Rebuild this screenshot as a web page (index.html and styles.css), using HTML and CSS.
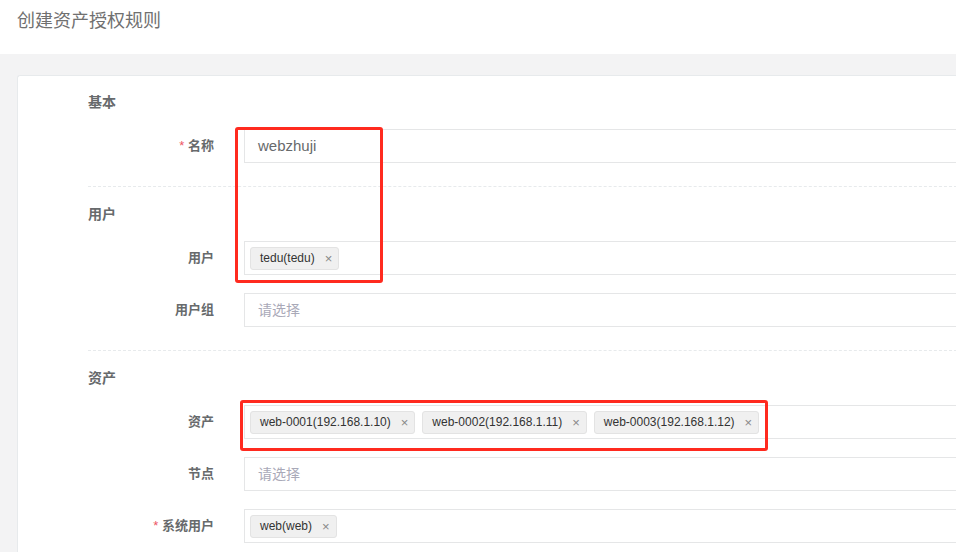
FILE: index.html
```html
<!DOCTYPE html>
<html lang="zh">
<head>
<meta charset="utf-8">
<title>创建资产授权规则</title>
<link rel="stylesheet" href="styles.css">
</head>
<body>
<header class="page-head">
  <h2 class="page-title">创建资产授权规则</h2>
</header>
<main class="page-body">
  <section class="card">
    <h3 class="sec-title">基本</h3>
    <div class="row">
      <label class="lbl"><span class="req">*</span> 名称</label>
      <div class="field"><span class="val">webzhuji</span></div>
    </div>
    <div class="sep"></div>

    <h3 class="sec-title">用户</h3>
    <div class="row">
      <label class="lbl">用户</label>
      <div class="field tags">
        <span class="tag">tedu(tedu)<span class="x">×</span></span>
      </div>
    </div>
    <div class="row">
      <label class="lbl">用户组</label>
      <div class="field"><span class="ph">请选择</span></div>
    </div>
    <div class="sep"></div>

    <h3 class="sec-title">资产</h3>
    <div class="row">
      <label class="lbl">资产</label>
      <div class="field tags">
        <span class="tag">web-0001(192.168.1.10)<span class="x">×</span></span>
        <span class="tag">web-0002(192.168.1.11)<span class="x">×</span></span>
        <span class="tag">web-0003(192.168.1.12)<span class="x">×</span></span>
      </div>
    </div>
    <div class="row">
      <label class="lbl">节点</label>
      <div class="field"><span class="ph">请选择</span></div>
    </div>
    <div class="row">
      <label class="lbl"><span class="req">*</span> 系统用户</label>
      <div class="field tags">
        <span class="tag">web(web)<span class="x">×</span></span>
      </div>
    </div>
  </section>
</main>
<div class="mark mark-user"></div>
<div class="mark mark-asset"></div>
</body>
</html>
```
FILE: styles.css
```css
* { box-sizing: border-box; }
html, body { margin: 0; padding: 0; }
body {
  width: 956px;
  height: 552px;
  overflow: hidden;
  background: #f3f3f4;
  font-family: "Liberation Sans", Arial, "Noto Sans CJK SC", sans-serif;
  color: #676a6c;
  position: relative;
}
.page-head {
  height: 54px;
  background: #fff;
  padding: 10px 0 0 17px;
}
.page-title {
  margin: 0;
  font-size: 18px;
  line-height: 22px;
  font-weight: normal;
  color: #707070;
}
.page-body {
  padding: 21px 0 0 17px;
}
.card {
  background: #fff;
  border: 1px solid #e7eaec;
  border-right: none;
  border-bottom: none;
  border-radius: 3px 0 0 0;
  width: 960px;
  padding: 16px 0 24px 70px;
}
.sec-title {
  margin: 0 0 17px 0;
  font-size: 14px;
  line-height: 20px;
  font-weight: bold;
  color: #676a6c;
}
.row {
  display: flex;
  align-items: center;
  margin-bottom: 18px;
}
.row:last-child { margin-bottom: 0; }
.lbl {
  width: 156px;
  padding-right: 30px;
  padding-bottom: 3px;
  text-align: right;
  font-size: 13px;
  font-weight: bold;
  color: #676a6c;
}
.req { color: #ed5565; font-weight: normal; }
.field {
  flex: 1;
  height: 34px;
  border: 1px solid #e5e6e7;
  border-right: none;
  display: flex;
  align-items: center;
  padding: 0 13px 2px 13px;
  font-size: 15px;
}
.val { color: #676a6c; }
.ph { color: #a9a9b8; font-size: 14px; }
.field.tags {
  padding: 0 5px;
  gap: 7px;
}
.tag {
  display: inline-flex;
  align-items: center;
  height: 23px;
  padding: 0 6px 0 9px;
  background: #f0f0f0;
  border: 1px solid #e3e3e3;
  border-radius: 3px;
  font-size: 12px;
  color: #333;
}
.tag .x {
  margin-left: 10px;
  color: #888;
  font-size: 13px;
}
.sep {
  border-top: 1px dashed #e7eaec;
  margin: 23px 0 17px 0;
}
.mark {
  position: absolute;
  border: 3px solid #ff2a1f;
  border-radius: 3px;
}
.mark-user { left: 235px; top: 127px; width: 148px; height: 156px; }
.mark-asset { left: 240px; top: 400px; width: 528px; height: 51px; }
```
